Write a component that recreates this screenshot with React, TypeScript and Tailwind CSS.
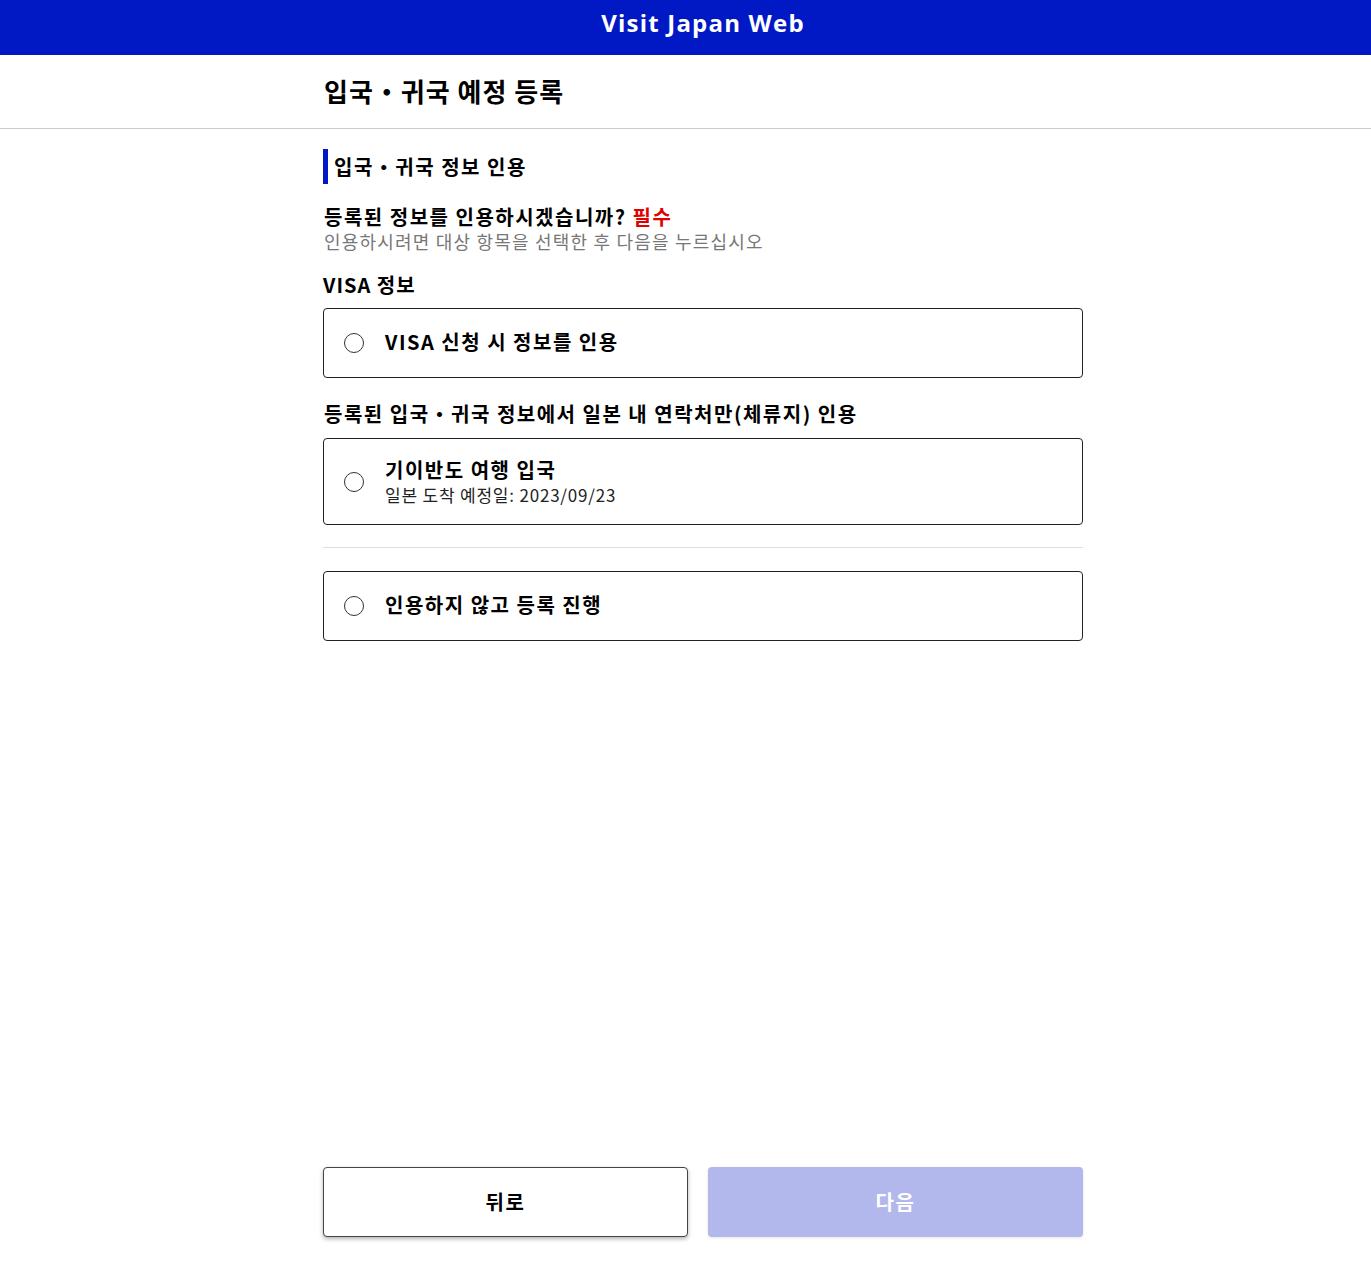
import React from "react";

const kr = { fontFamily: '"Noto Sans CJK KR", "Noto Sans", sans-serif' };

function Radio() {
  return <span className="inline-block w-[20px] h-[20px] rounded-full border border-[#333] bg-white shrink-0" />;
}

function Card({ title, sub }: { title: string; sub?: string }) {
  return (
    <div className={`flex items-center border border-[#222] rounded-[4px] pl-[20px] ${sub ? "h-[87px]" : "h-[70px]"}`}>
      <Radio />
      <div className={`ml-[21px] flex flex-col ${sub ? "" : "mb-[3px]"}`}>
        <span className="text-[20px] font-bold text-black leading-[26px] tracking-[1.5px]">{title}</span>
        {sub && <span className="text-[17px] text-[#222] leading-[24px] tracking-[0.8px]">{sub}</span>}
      </div>
    </div>
  );
}

export default function App() {
  return (
    <div className="min-h-[1273px] bg-white flex flex-col pl-[35px]" style={kr}>
      <header className="h-[55px] bg-[#0019c4] flex items-center justify-center pb-[10px] -ml-[35px] pl-[35px]">
        <span className="text-white text-[24px] font-bold tracking-[1.2px]" style={{ fontFamily: '"Open Sans", sans-serif' }}>
          Visit Japan Web
        </span>
      </header>
      <div className="h-[74px] border-b border-[#cccccc] flex items-center -ml-[35px] pl-[35px]">
        <div className="w-[760px] mx-auto pl-[1px] pb-[2px]">
          <h1 className="text-[26px] font-bold text-black leading-none tracking-[1px]">입국・귀국 예정 등록</h1>
        </div>
      </div>
      <main className="w-[760px] mx-auto flex-1 flex flex-col">
        <div className="mt-[20px] h-[35px] border-l-[5px] border-[#0019c4] pl-[6px] flex items-center">
          <h2 className="text-[20px] font-bold text-black tracking-[1.5px]">입국・귀국 정보 인용</h2>
        </div>
        <div className="mt-[21px] pl-[1px]">
          <p className="text-[20px] font-bold text-black leading-[24px] tracking-[1.5px]">
            등록된 정보를 인용하시겠습니까? <span className="text-[#e00000]">필수</span>
          </p>
          <p className="mt-[1px] text-[18px] text-[#777] leading-[22px] tracking-[1.2px]">인용하시려면 대상 항목을 선택한 후 다음을 누르십시오</p>
        </div>
        <p className="mt-[20px] text-[20px] font-bold text-black leading-[26px] tracking-[1px]">VISA 정보</p>
        <div className="mt-[10px]">
          <Card title="VISA 신청 시 정보를 인용" />
        </div>
        <p className="mt-[23px] text-[20px] font-bold text-black leading-[26px] pl-[1px] tracking-[1.5px]">
          등록된 입국・귀국 정보에서 일본 내 연락처만(체류지) 인용
        </p>
        <div className="mt-[11px]">
          <Card title="기이반도 여행 입국" sub="일본 도착 예정일: 2023/09/23" />
        </div>
        <div className="mt-[22px] border-t border-[#dddddd]" />
        <div className="mt-[23px]">
          <Card title="인용하지 않고 등록 진행" />
        </div>
        <div className="flex-1" />
        <div className="flex gap-[20px] mb-[36px]">
          <button className="w-[365px] h-[70px] rounded-[4px] border border-[#444] bg-white text-[20px] font-bold text-black tracking-[1.5px] shadow-[0_2px_4px_rgba(0,0,0,0.3)]">
            뒤로
          </button>
          <button className="flex-1 h-[70px] rounded-[4px] bg-[#b2b8ec] text-[20px] font-bold text-white tracking-[1.5px] shadow-[0_1px_3px_rgba(0,0,0,0.1)]">
            다음
          </button>
        </div>
      </main>
    </div>
  );
}
